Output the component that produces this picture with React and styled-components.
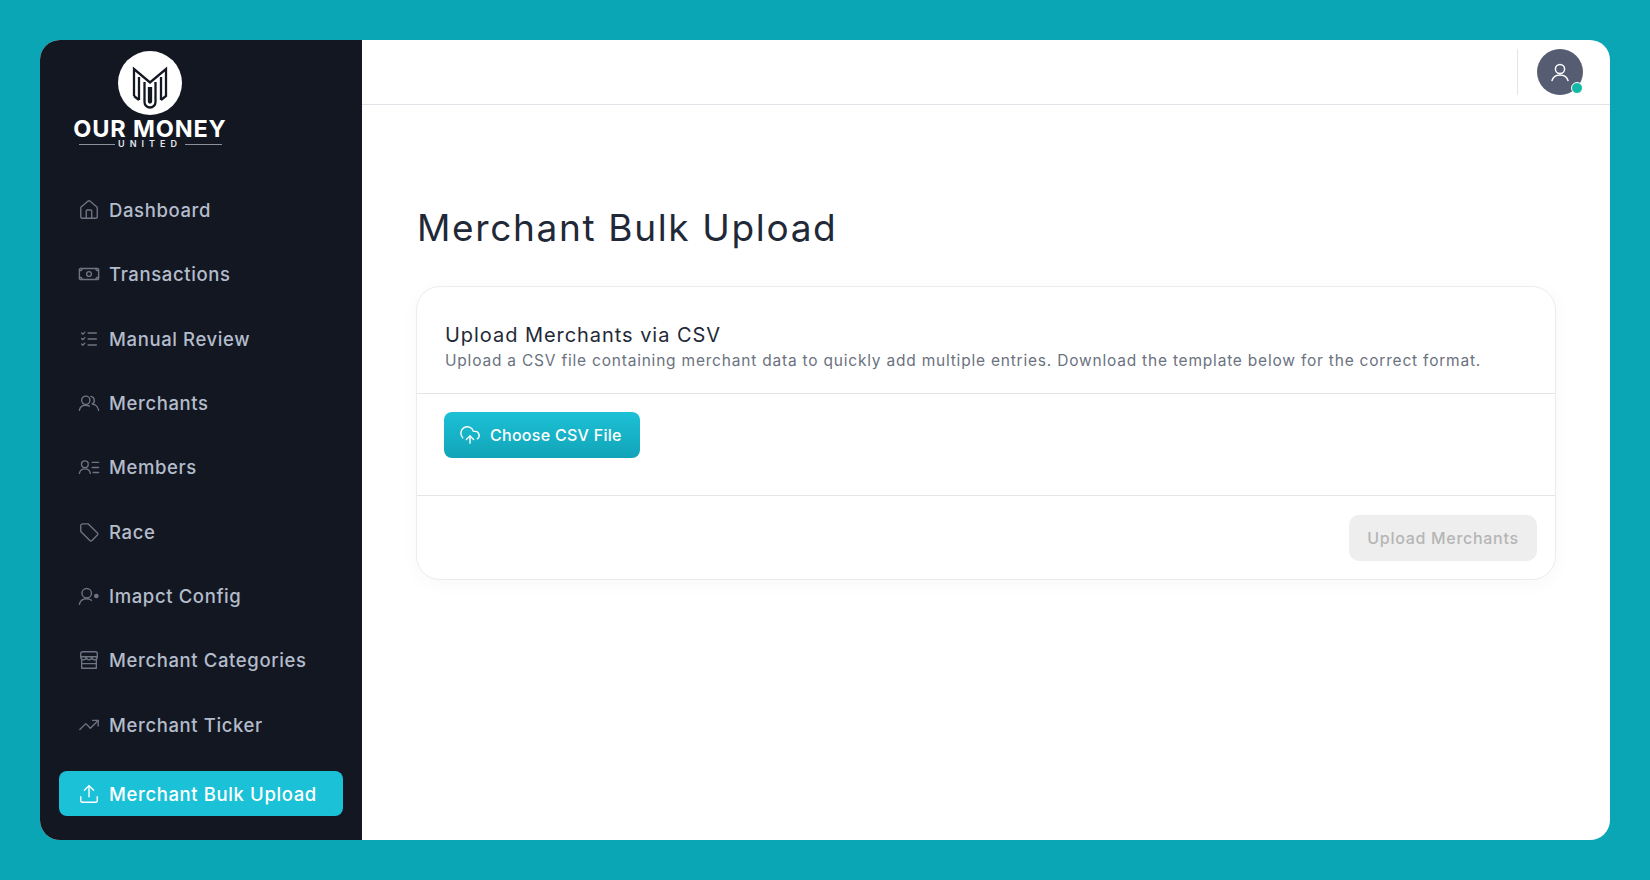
import React from 'react'
import styled, { createGlobalStyle } from 'styled-components'
import { House, TrendingUp, Upload, CloudUpload } from 'lucide-react'

const GlobalStyle = createGlobalStyle`
  html, body {
    margin: 0;
    padding: 0;
    height: 100%;
  }
  body {
    background: #0aa6b6;
    font-family: Inter, "Liberation Sans", sans-serif;
  }
  * {
    box-sizing: border-box;
  }
`

const Page = styled.div`
  width: 1650px;
  height: 880px;
  padding: 40px;
  background: #0aa6b6;
`

const Shell = styled.div`
  display: flex;
  width: 1570px;
  height: 800px;
  border-radius: 20px;
  overflow: hidden;
  background: #fff;
`

const Sidebar = styled.aside`
  display: flex;
  flex-direction: column;
  width: 322px;
  flex-shrink: 0;
  padding: 11px 19px 0;
  background: #131722;
`

const Logo = styled.div`
  display: flex;
  flex-direction: column;
  align-items: center;
  width: 182px;
`

const LogoName = styled.div`
  margin-top: 4px;
  color: #fff;
  font-size: 23.5px;
  line-height: 20px;
  font-weight: 700;
  letter-spacing: 0.85px;
  white-space: nowrap;
`

const LogoSub = styled.div`
  display: flex;
  align-items: center;
  gap: 3px;
  width: 143px;
  color: #e4e6ea;
  font-size: 9px;
  line-height: 10px;
  font-weight: 600;
  letter-spacing: 5px;

  &::before,
  &::after {
    content: '';
    flex: 1;
    height: 1px;
    background: #8d909a;
  }
`

const Nav = styled.nav`
  display: flex;
  flex-direction: column;
  gap: 19.3px;
  margin-top: 38.7px;
`

const NavItem = styled.a`
  display: flex;
  align-items: center;
  gap: 9px;
  height: 45px;
  margin-top: ${(p) => (p.$active ? '5px' : '0')};
  padding-left: 19px;
  border-radius: 8px;
  background: ${(p) => (p.$active ? '#1bc1d7' : 'transparent')};
  color: ${(p) => (p.$active ? '#fff' : '#b3bccb')};
  font-size: 18.5px;
  font-weight: 500;
  letter-spacing: 0.62px;
  white-space: nowrap;

  svg {
    flex-shrink: 0;
    color: ${(p) => (p.$active ? '#fff' : '#6d7482')};
  }
`

const Main = styled.main`
  display: flex;
  flex-direction: column;
  flex: 1;
  min-width: 0;
`

const Header = styled.header`
  display: flex;
  align-items: center;
  justify-content: flex-end;
  gap: 19px;
  height: 65px;
  padding-right: 27.5px;
  border-bottom: 1px solid #e1e3e8;
`

const Divider = styled.div`
  width: 1px;
  height: 46px;
  background: #e2e4e8;
`

const Avatar = styled.div`
  position: relative;
  display: flex;
  align-items: center;
  justify-content: center;
  width: 46px;
  height: 46px;
  border-radius: 50%;
  background: #565d73;
  color: #fff;
`

const StatusDot = styled.span`
  position: absolute;
  right: 0;
  bottom: 1px;
  width: 12px;
  height: 12px;
  border: 1.5px solid #fff;
  border-radius: 50%;
  background: #14b8a6;
`

const Content = styled.div`
  padding: 99px 54px 0 54px;
`

const Title = styled.h1`
  margin: 0 0 34px 1px;
  color: #1f2937;
  font-size: 37px;
  line-height: 48px;
  font-weight: 400;
  letter-spacing: 1.65px;
`

const Card = styled.section`
  height: 294px;
  border: 1px solid #ececec;
  border-radius: 24px;
  background: #fff;
  box-shadow: 0 4px 20px rgba(0, 0, 0, 0.03);
`

const CardHead = styled.div`
  height: 106.5px;
  padding: 36px 28px 0;
  border-bottom: 1px solid #e5e5e5;
`

const CardTitle = styled.h2`
  margin: 0;
  color: #1f2937;
  font-size: 20px;
  line-height: 24px;
  font-weight: 400;
  letter-spacing: 0.95px;
`

const CardText = styled.p`
  margin: 3px 0 0;
  color: #6b7280;
  font-size: 15.5px;
  line-height: 22px;
  letter-spacing: 0.79px;
  white-space: nowrap;
`

const CardBody = styled.div`
  height: 102px;
  padding: 18px 27px 0;
  border-bottom: 1px solid #e5e5e5;
`

const CardFoot = styled.div`
  display: flex;
  justify-content: flex-end;
  padding: 19px 18px 0;
`

const ChooseButton = styled.button`
  display: flex;
  align-items: center;
  gap: 9px;
  width: 196px;
  height: 46px;
  padding: 0 0 0 15px;
  border: 0;
  border-radius: 8px;
  background: linear-gradient(180deg, #1cc1d6 0%, #12a4b8 100%);
  color: #fff;
  font-family: inherit;
  font-size: 16px;
  font-weight: 500;
  letter-spacing: 0.28px;
`

const UploadButton = styled.button`
  width: 188px;
  height: 46px;
  padding: 0;
  border: 0;
  border-radius: 10px;
  background: #eeeeee;
  color: #b5b5b5;
  font-family: inherit;
  font-size: 16px;
  font-weight: 500;
  letter-spacing: 0.7px;
`

const LogoMark = () => (
  <svg width="64" height="64" viewBox="0 0 64 64">
    <circle cx="32" cy="32" r="32" fill="#fff" />
    <g fill="none" stroke="#131722" strokeWidth="2.3">
      <path d="M16 45V18l16 13.500L48 18v27l-5 4" />
      <path d="M16 45l5 4" />
      <path d="M21 49V26" />
      <path d="M43 49V26" />
      <path d="M26.500 31V51a5.500 5.500 0 0 0 11 0V31" />
      <path d="M31 36V50.500a1 1 0 0 0 2 0V36" />
    </g>
  </svg>
)

const Icon = ({ size = 24, children }) => (
  <svg width={size} height={size} viewBox="0 0 24 24" fill="none" stroke="currentColor" strokeWidth="1.5" strokeLinecap="round" strokeLinejoin="round">
    {children}
  </svg>
)

const BanknoteIcon = (props) => (
  <Icon {...props}>
    <rect x="1.500" y="6" width="21" height="12" rx="1" />
    <path d="M1.500 8.500c2 0 3-1 3-2.500M22.500 8.500c-2 0-3-1-3-2.500M1.500 15.500c2 0 3 1 3 2.500M22.500 15.500c-2 0-3 1-3 2.500" />
    <circle cx="12" cy="12" r="2.600" />
  </Icon>
)

const ChecklistIcon = (props) => (
  <Icon {...props}>
    <path d="M4 5.500l1.200 1.200L7.500 4.500M4 11.500l1.200 1.200 2.300-2.200M4 17.500l1.200 1.200 2.300-2.200" />
    <path d="M11 5.500h9M11 12h9M11 18.500h9" />
  </Icon>
)

const UsersIcon = (props) => (
  <Icon {...props}>
    <circle cx="8.500" cy="9" r="4.500" />
    <path d="M1.500 20c.6-3.500 3.500-5.500 7-5.500 1.500 0 2.800.4 3.900 1" />
    <path d="M14 4.800a4.500 4.500 0 0 1 1.500 8.400c3.500.3 6.200 3 7 6.800" />
  </Icon>
)

const MembersIcon = (props) => (
  <Icon {...props}>
    <circle cx="7.500" cy="9" r="3.700" />
    <path d="M1.500 19c.6-3.300 3-5 6-5s5.400 1.700 6 5" />
    <path d="M15.500 7h7M15.500 12.500h7M16.500 18h6" />
  </Icon>
)

const TagIcon = (props) => (
  <Icon {...props}>
    <path d="M3 5.200A2 2 0 0 1 5 3.200h6.200l10 9.800a1.600 1.600 0 0 1 0 2.300l-6 6a1.600 1.600 0 0 1-2.300 0L3 11.400z" />
  </Icon>
)

const ConfigIcon = (props) => (
  <Icon {...props}>
    <circle cx="9.500" cy="9" r="5.200" />
    <path d="M1.500 21c.8-3.500 4-6 8-6 2 0 3.800.6 5.200 1.700" />
    <circle cx="20" cy="12" r="1.800" fill="currentColor" />
  </Icon>
)

const StoreIcon = (props) => (
  <Icon {...props}>
    <path d="M5 3h14a2 2 0 0 1 2 2v3.500H3V5a2 2 0 0 1 2-2z" />
    <path d="M3 8.500c0 2 1.500 3.300 3 3.300s3-1.300 3-3.300c0 2 1.500 3.300 3 3.300s3-1.300 3-3.300c0 2 1.500 3.300 3 3.300s3-1.300 3-3.300" />
    <path d="M4 11.500V21h16v-9.500M4 16h16" />
  </Icon>
)

const UserIcon = (props) => (
  <Icon {...props}>
    <circle cx="12" cy="9" r="4.600" />
    <path d="M4 20.500c1-3.300 4.200-5.500 8-5.500s7 2.200 8 5.500" />
  </Icon>
)

const items = [
  { label: 'Dashboard', NavIcon: House },
  { label: 'Transactions', NavIcon: BanknoteIcon },
  { label: 'Manual Review', NavIcon: ChecklistIcon },
  { label: 'Merchants', NavIcon: UsersIcon },
  { label: 'Members', NavIcon: MembersIcon },
  { label: 'Race', NavIcon: TagIcon },
  { label: 'Imapct Config', NavIcon: ConfigIcon },
  { label: 'Merchant Categories', NavIcon: StoreIcon },
  { label: 'Merchant Ticker', NavIcon: TrendingUp },
  { label: 'Merchant Bulk Upload', NavIcon: Upload, active: true },
]

export default function App() {
  return (
    <Page>
      <GlobalStyle />
      <Shell>
        <Sidebar>
          <Logo>
            <LogoMark />
            <LogoName>OUR MONEY</LogoName>
            <LogoSub>UNITED</LogoSub>
          </Logo>
          <Nav>
            {items.map(({ label, NavIcon, active }) => (
              <NavItem key={label} $active={active}>
                <NavIcon size={22} strokeWidth={1.5} />
                {label}
              </NavItem>
            ))}
          </Nav>
        </Sidebar>
        <Main>
          <Header>
            <Divider />
            <Avatar>
              <UserIcon size={24} />
              <StatusDot />
            </Avatar>
          </Header>
          <Content>
            <Title>Merchant Bulk Upload</Title>
            <Card>
              <CardHead>
                <CardTitle>Upload Merchants via CSV</CardTitle>
                <CardText>
                  Upload a CSV file containing merchant data to quickly add multiple entries. Download the template below for the correct format.
                </CardText>
              </CardHead>
              <CardBody>
                <ChooseButton>
                  <CloudUpload size={22} strokeWidth={1.5} />
                  Choose CSV File
                </ChooseButton>
              </CardBody>
              <CardFoot>
                <UploadButton disabled>Upload Merchants</UploadButton>
              </CardFoot>
            </Card>
          </Content>
        </Main>
      </Shell>
    </Page>
  )
}
